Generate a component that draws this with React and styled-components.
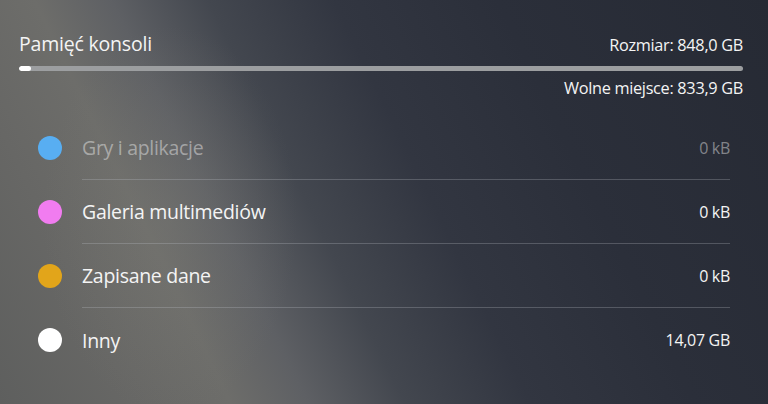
import React from 'react';
import styled, { createGlobalStyle } from 'styled-components';

// Console storage screen: header with totals, usage bar, list of categories.

const GlobalStyle = createGlobalStyle`
    html, body {
        margin: 0;
        padding: 0;
    }
    body {
        width: 768px;
        height: 404px;
        overflow: hidden;
        font-family: "Open Sans", "Noto Sans", sans-serif;
        color: #f4f4f4;
    }
`

const Screen = styled.div`
    box-sizing: border-box;
    width: 768px;
    height: 404px;
    padding: 30px 25px 0 19px;
    background:
        radial-gradient(ellipse 170px 260px at 170px 220px, rgba(125, 124, 118, 0.3), transparent 75%),
        linear-gradient(64deg, #5e5f5e 0%, #676765 14%, #6d6d6a 24%, #5e6064 32%, #43474f 42%, #323641 55%, #2b2f3a 72%, #262a34 100%);
`

const Header = styled.div`
    display: flex;
    justify-content: space-between;
    align-items: baseline;
`

const Title = styled.div`
    font-size: 19.5px;
    letter-spacing: -0.2px;
`

const Meta = styled.div`
    font-size: 16.3px;
    letter-spacing: -0.3px;
    text-align: right;
`

const Track = styled.div`
    margin-top: 9px;
    height: 5px;
    border-radius: 3px;
    background: #9c9ea0;
    overflow: hidden;
`

const Fill = styled.div`
    height: 100%;
    background: #ffffff;
    border-radius: 3px;
`

const Free = styled(Meta)`
    margin-top: 6px;
`

const List = styled.div`
    margin-top: 17px;
    padding: 0 13px 0 19px;
`

const Row = styled.div`
    display: flex;
    align-items: center;
    height: 64px;
`

const Dot = styled.div`
    width: 24px;
    height: 24px;
    border-radius: 50%;
    background: ${props => props.color};
    flex-shrink: 0;
`

const Body = styled.div`
    flex: 1;
    display: flex;
    justify-content: space-between;
    align-items: center;
    margin-left: 20px;
    align-self: stretch;
    color: ${props => props.dim ? 'rgba(244, 244, 244, 0.45)' : '#f4f4f4'};
    border-bottom: ${props => props.last ? 'none' : '1px solid rgba(190, 194, 200, 0.28)'};
`

const Label = styled.div`
    font-size: 19.5px;
    letter-spacing: -0.3px;
`

const Value = styled.div`
    font-size: 16px;
    letter-spacing: -0.3px;
`

const items = [
    { label: 'Gry i aplikacje', value: '0 kB', color: '#58aef2', dim: true },
    { label: 'Galeria multimediów', value: '0 kB', color: '#f17cf0' },
    { label: 'Zapisane dane', value: '0 kB', color: '#e2a51a' },
    { label: 'Inny', value: '14,07 GB', color: '#ffffff' },
];

const App = () => {
    const used = (14.07 / 848) * 100;

    return (
        <>
        <GlobalStyle />
        <Screen>
            <Header>
                <Title>Pamięć konsoli</Title>
                <Meta>Rozmiar: 848,0 GB</Meta>
            </Header>
            <Track>
                <Fill style={{ width: `${Math.max(used, 1.7)}%` }} />
            </Track>
            <Free>Wolne miejsce: 833,9 GB</Free>

            <List>
                {items.map((item, i) => (
                    <Row key={item.label}>
                        <Dot color={item.color} />
                        <Body dim={item.dim} last={i === items.length - 1}>
                            <Label>{item.label}</Label>
                            <Value>{item.value}</Value>
                        </Body>
                    </Row>
                ))}
            </List>
        </Screen>
        </>
    )
}

export default App;
